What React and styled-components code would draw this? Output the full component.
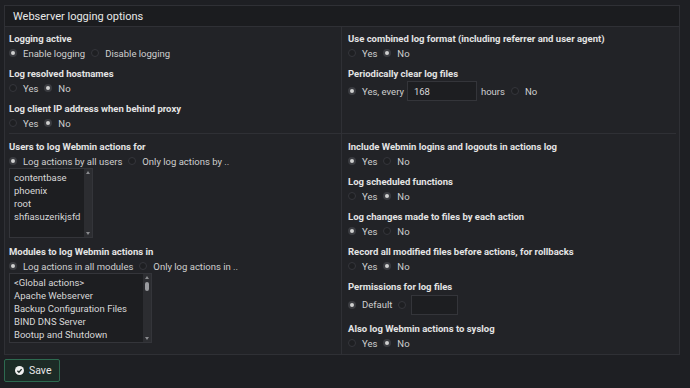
import React from 'react';
import styled, { createGlobalStyle } from 'styled-components';

const GlobalStyle = createGlobalStyle`
  html, body {
    margin: 0;
    padding: 0;
    background: #1e1f23;
    font-family: Roboto, "Liberation Sans", sans-serif;
    color: #d6d6d6;
  }
  * { box-sizing: border-box; }
`;

const Page = styled.div`
  width: 690px;
  height: 388px;
  padding: 5px 10px 0 4px;
  background: #1e1f23;
  overflow: hidden;
`;

const Panel = styled.div`
  border: 1px solid #2f3035;
  background: #222327;
`;

const Header = styled.div`
  height: 21px;
  padding: 0 8px;
  display: flex;
  align-items: center;
  background: #1b1c1f;
  border-bottom: 1px solid #2f3035;
  font-size: 11px;
  color: #e8e8e8;
`;

const Body = styled.div`
  padding: 0 3px 0 4px;
`;

const Section = styled.div`
  display: grid;
  grid-template-columns: 333px 1fr;
  border-top: ${p => (p.$divided ? '1px solid #2f3035' : 'none')};
`;

const Column = styled.div`
  display: flex;
  flex-direction: column;
  gap: 7px;
  padding: ${p => p.$pad};
  padding-left: ${p => (p.$right ? '6px' : '0')};
  border-right: ${p => (p.$line ? '1px solid #2f3035' : 'none')};
`;

const Field = styled.div`
  display: flex;
  flex-direction: column;
`;

const Label = styled.div`
  font-size: 9.5px;
  font-weight: 700;
  line-height: 14px;
  color: #e4e4e4;
`;

const Row = styled.div`
  display: flex;
  align-items: center;
  height: ${p => p.$h || 14}px;
  font-size: 9.5px;
  color: #cfcfcf;
`;

const Dot = styled.span`
  width: 8px;
  height: 8px;
  margin: 0 6px 0 ${p => (p.$first ? '0' : '6px')};
  border-radius: 50%;
  flex: none;
  background: ${p => (p.$on ? '#d0d0d0' : '#1e1f22')};
  border: ${p => (p.$on ? '2px solid #3b3c41' : '1px solid #35363b')};
`;

const TextBox = styled.div`
  width: ${p => p.$w}px;
  height: 20px;
  margin: 0 4px 0 ${p => p.$left || 0}px;
  padding: 0 6px;
  display: flex;
  align-items: center;
  background: #1d1e21;
  border: 1px solid #34353a;
  font-size: 9.5px;
  color: #d8d8d8;
`;

const ListBox = styled.div`
  width: ${p => p.$w}px;
  height: 70px;
  display: flex;
  background: #1d1e21;
  border: 1px solid #34353a;
`;

const Items = styled.div`
  flex: 1;
  padding: 2px 0 0 4px;
  overflow: hidden;
`;

const Item = styled.div`
  font-size: 9.5px;
  line-height: 13px;
  color: #d8d8d8;
  white-space: nowrap;
`;

const Scroll = styled.div`
  width: 8px;
  display: flex;
  flex-direction: column;
  align-items: center;
  padding: 2px 0;
  background: #2c2d31;
`;

const Arrow = styled.span`
  width: 0;
  height: 0;
  border-left: 2.5px solid transparent;
  border-right: 2.5px solid transparent;
  ${p => (p.$down ? 'border-top: 3px solid #8a8b8f;' : 'border-bottom: 3px solid #8a8b8f;')}
`;

const Thumb = styled.span`
  width: 4px;
  height: 9px;
  border-radius: 2px;
  background: #9a9b9f;
`;

const ScrollMid = styled.div`
  flex: 1;
  display: flex;
  flex-direction: column;
  align-items: center;
  padding-top: 3px;
`;

const Footer = styled.div`
  padding-top: 4px;
`;

const SaveButton = styled.button`
  height: 23px;
  width: 56px;
  display: flex;
  align-items: center;
  gap: 5px;
  padding: 0 0 0 10px;
  background: #1c2b26;
  border: 1px solid #2d6a50;
  border-radius: 2px;
  color: #e8e8e8;
  font-family: Roboto, "Liberation Sans", sans-serif;
  font-size: 10.5px;
`;

function Radios({ options, value }) {
  return (
    <Row>
      {options.map((o, i) => (
        <React.Fragment key={o}>
          <Dot $first={i === 0} $on={value === i} />
          {o}
        </React.Fragment>
      ))}
    </Row>
  );
}

function YesNo({ on }) {
  return <Radios options={['Yes', 'No']} value={on ? 0 : 1} />;
}

function List({ w, items, thumb }) {
  return (
    <ListBox $w={w}>
      <Items>
        {items.map(t => (
          <Item key={t}>{t}</Item>
        ))}
      </Items>
      <Scroll>
        <Arrow />
        <ScrollMid>{thumb ? <Thumb /> : null}</ScrollMid>
        <Arrow $down />
      </Scroll>
    </ListBox>
  );
}

function CheckIcon() {
  return (
    <svg width="9" height="9" viewBox="0 0 16 16">
      <circle cx="8" cy="8" r="8" fill="#f0f0f0" />
      <path d="M4.3 8.3 L7 11 L11.8 5.6" fill="none" stroke="#1c2b26" strokeWidth="2.4" />
    </svg>
  );
}

export default function App() {
  return (
    <Page>
      <GlobalStyle />
      <Panel>
        <Header>Webserver logging options</Header>
        <Body>
          <Section>
            <Column $line $pad="5px 0 3px 0">
              <Field>
                <Label>Logging active</Label>
                <Radios options={['Enable logging', 'Disable logging']} value={0} />
              </Field>
              <Field>
                <Label>Log resolved hostnames</Label>
                <YesNo on={false} />
              </Field>
              <Field>
                <Label>Log client IP address when behind proxy</Label>
                <YesNo on={false} />
              </Field>
            </Column>
            <Column $right $pad="5px 0 3px 0">
              <Field>
                <Label>Use combined log format (including referrer and user agent)</Label>
                <YesNo on={false} />
              </Field>
              <Field>
                <Label>Periodically clear log files</Label>
                <Row $h={20}>
                  <Dot $first $on />
                  Yes, every
                  <TextBox $w={70} $left={3}>168</TextBox>
                  hours
                  <Dot />
                  No
                </Row>
              </Field>
            </Column>
          </Section>
          <Section $divided>
            <Column $line $pad="6px 0 11px 0">
              <Field>
                <Label>Users to log Webmin actions for</Label>
                <Radios options={['Log actions by all users', 'Only log actions by ..']} value={0} />
                <List w={84} items={['contentbase', 'phoenix', 'root', 'shfiasuzerikjsfd']} />
              </Field>
              <Field>
                <Label>Modules to log Webmin actions in</Label>
                <Radios options={['Log actions in all modules', 'Only log actions in ..']} value={0} />
                <List
                  w={143}
                  thumb
                  items={[
                    '<Global actions>',
                    'Apache Webserver',
                    'Backup Configuration Files',
                    'BIND DNS Server',
                    'Bootup and Shutdown',
                  ]}
                />
              </Field>
            </Column>
            <Column $right $pad="6px 0 4px 0">
              <Field>
                <Label>Include Webmin logins and logouts in actions log</Label>
                <YesNo on />
              </Field>
              <Field>
                <Label>Log scheduled functions</Label>
                <YesNo on={false} />
              </Field>
              <Field>
                <Label>Log changes made to files by each action</Label>
                <YesNo on />
              </Field>
              <Field>
                <Label>Record all modified files before actions, for rollbacks</Label>
                <YesNo on={false} />
              </Field>
              <Field>
                <Label>Permissions for log files</Label>
                <Row $h={21}>
                  <Dot $first $on />
                  Default
                  <Dot />
                  <TextBox $w={47} $left={-1} />
                </Row>
              </Field>
              <Field>
                <Label>Also log Webmin actions to syslog</Label>
                <YesNo on={false} />
              </Field>
            </Column>
          </Section>
        </Body>
      </Panel>
      <Footer>
        <SaveButton>
          <CheckIcon />
          Save
        </SaveButton>
      </Footer>
    </Page>
  );
}
